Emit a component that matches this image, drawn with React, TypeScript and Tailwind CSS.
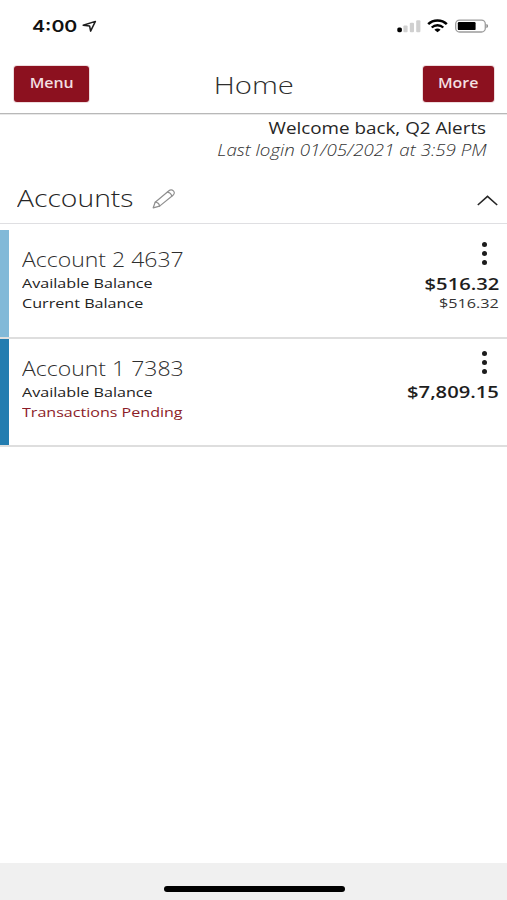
import type { ReactNode } from "react";

function LocationArrow() {
  return (
    <svg width="15" height="13" viewBox="0 0 15 13" fill="none">
      <path d="M1.2 5.3 13.4 1.4 8.6 11.2 7.6 5.9Z" stroke="#1c1c1c" strokeWidth="1.5" strokeLinejoin="round" />
    </svg>
  );
}

function Signal() {
  return (
    <svg width="24" height="14" viewBox="0 0 24 14">
      <rect x="0.3" y="8.4" width="4.6" height="4.8" rx="1.6" fill="#000" />
      <rect x="6.4" y="6.4" width="4.2" height="6.8" rx="1" fill="#d0d0d0" />
      <rect x="12.8" y="3.8" width="4.2" height="9.4" rx="1" fill="#d0d0d0" />
      <rect x="19.2" y="1.2" width="4.2" height="12" rx="1" fill="#d0d0d0" />
    </svg>
  );
}

function Wifi() {
  return (
    <svg width="21" height="14" viewBox="0 0 21 14" fill="none" stroke="#000">
      <path d="M1.2 5.2C6.2 0.2 14.8 0.2 19.8 5.2" strokeWidth="2.5" />
      <path d="M4.7 8.5C7.9 5.5 13.1 5.5 16.3 8.5" strokeWidth="2.3" />
      <path d="M10.5 13.2 7.4 10.7C9.2 9.2 11.8 9.2 13.6 10.7Z" fill="#000" stroke="none" />
    </svg>
  );
}

function Battery() {
  return (
    <svg width="34" height="14" viewBox="0 0 34 14">
      <rect x="0.7" y="1.2" width="29.6" height="11.8" rx="3.8" fill="#fff" stroke="#9c9c9c" strokeWidth="1.3" />
      <rect x="2.8" y="3.1" width="17.8" height="8" rx="1.2" fill="#000" />
      <path d="M31.4 5.1C33.6 5.7 33.6 8.6 31.4 9.2Z" fill="#8a8a8a" />
    </svg>
  );
}

function Pencil() {
  return (
    <svg width="24" height="20" viewBox="0 0 24 20" fill="none" stroke="#8f8f8f" strokeWidth="1.2" strokeLinejoin="round" strokeLinecap="round">
      <path d="M1.2 18.8 3.2 13.2 16.6 2C18.2 0.7 20.2 0.8 21.4 1.9C22.7 3.2 22.6 4.9 21 6.2L7.6 17.1Z" />
      <path d="M3.2 13.2C5.2 13.4 7.2 15 7.6 17.1M15.4 3.1C17.6 3.4 19.3 5 19.8 7.1" />
    </svg>
  );
}

function MoreDots() {
  return (
    <button aria-label="Account options" className="mr-[12px] flex flex-col items-center gap-[4px]">
      <span className="h-[5px] w-[5.4px] rounded-full bg-[#1c1c1c]" />
      <span className="h-[5px] w-[5.4px] rounded-full bg-[#1c1c1c]" />
      <span className="h-[5px] w-[5.4px] rounded-full bg-[#1c1c1c]" />
    </button>
  );
}

function NavButton({ className, children }: { className: string; children: ReactNode }) {
  return (
    <button className={`h-9 rounded-[3px] bg-[#8c111f] pb-[3px] text-[13.5px] font-semibold leading-[20px] text-[#f3dfe1] ring-1 ring-[#8c111f]/15 ${className}`}>
      <span className="inline-block scale-x-[1.18]">{children}</span>
    </button>
  );
}

type AccountProps = {
  name: string;
  bar: string;
  available: string;
  current?: string;
  pending?: boolean;
};

function Account({ name, bar, available, current, pending }: AccountProps) {
  return (
    <li className="flex h-[108.6px] border-b-2 border-[#dedede]">
      <div className={`w-[9px] shrink-0 ${bar}`} />
      <div className="flex flex-1 justify-between whitespace-nowrap pl-[13px] pr-[8px]">
        <div className="flex flex-col items-start pt-[17.4px]">
          <h3 className="origin-left scale-x-[1.18] text-[19.5px] font-light leading-[26px] text-[#2e2e2e]">{name}</h3>
          <p className="origin-left scale-x-[1.195] text-[13.5px] leading-5 text-[#222]">Available Balance</p>
          {pending ? (
            <p className="origin-left scale-x-[1.19] text-[13.5px] leading-5 text-[#8c1c28]">Transactions Pending</p>
          ) : (
            <p className="origin-left scale-x-[1.195] text-[13.5px] leading-5 text-[#222]">Current Balance</p>
          )}
        </div>
        <div className="flex flex-col items-end pt-[12.4px]">
          <MoreDots />
          <p className="mt-[7.4px] origin-right scale-x-[1.26] text-[16px] font-semibold leading-[22px] text-[#1e1e1e]">{available}</p>
          {current && <p className="-mt-[1.6px] origin-right scale-x-[1.2] text-[13.5px] leading-5 text-[#333]">{current}</p>}
        </div>
      </div>
    </li>
  );
}

export default function App() {
  return (
    <div className="flex h-[900px] w-[507px] flex-col overflow-hidden bg-white font-['Open_Sans','Noto_Sans',sans-serif]">
      <div className="flex h-[52px] items-center justify-between pl-8 pr-[18.5px]">
        <div className="flex items-center">
          <span className="w-[50px] font-['Inter',sans-serif] text-[16px] font-semibold leading-5 text-[#111]">
            <span className="inline-block origin-left scale-x-[1.23]">4:00</span>
          </span>
          <LocationArrow />
        </div>
        <div className="flex items-center">
          <Signal />
          <div className="ml-[6px]"><Wifi /></div>
          <div className="ml-[7px]"><Battery /></div>
        </div>
      </div>

      <header className="flex h-[62px] shrink-0 items-start justify-between border-b border-[#b8b8b8] pl-3.5 pr-[13px] pt-3.5 shadow-[0_1px_0_#e8e8e8]">
        <NavButton className="w-[75px]">Menu</NavButton>
        <h1 className="mr-[4px] scale-x-[1.22] pt-[1px] text-[24px] font-light leading-9 text-[#2e2e2e]">Home</h1>
        <NavButton className="w-[71px]">More</NavButton>
      </header>

      <section className="flex h-[47px] shrink-0 flex-col items-end whitespace-nowrap pr-[20.5px] pt-[3px]">
        <p className="origin-right scale-x-[1.215] text-[15.5px] leading-[22px] text-[#262626]">Welcome back, Q2 Alerts</p>
        <p className="origin-right scale-x-[1.21] text-[15.5px] font-light italic leading-[22px] text-[#333]">Last login 01/05/2021 at 3:59 PM</p>
      </section>

      <div className="flex h-[63px] shrink-0 items-start border-b border-[#dfdfe2] pl-[17px] pr-[9.5px] pt-[20.5px]">
        <h2 className="w-[135px] text-[23px] font-light leading-8 text-[#262626]">
          <span className="inline-block origin-left scale-x-[1.23]">Accounts</span>
        </h2>
        <div className="mt-[7px]"><Pencil /></div>
        <svg className="ml-auto mt-[13.5px]" width="21" height="11" viewBox="0 0 21 11" fill="none">
          <path d="M0.8 10 10.5 1.4 20.2 10" stroke="#262626" strokeWidth="1.6" />
        </svg>
      </div>

      <ul className="flex-1 pt-[6px]">
        <Account name="Account 2 4637" bar="bg-[#82b9d8]" available="$516.32" current="$516.32" />
        <Account name="Account 1 7383" bar="bg-[#237db0]" available="$7,809.15" pending />
      </ul>

      <footer className="flex h-[37px] shrink-0 items-start justify-center bg-[#f0f0f0] pl-[1px] pt-[22.5px]">
        <div className="h-[6px] w-[181px] rounded-full bg-black" />
      </footer>
    </div>
  );
}
